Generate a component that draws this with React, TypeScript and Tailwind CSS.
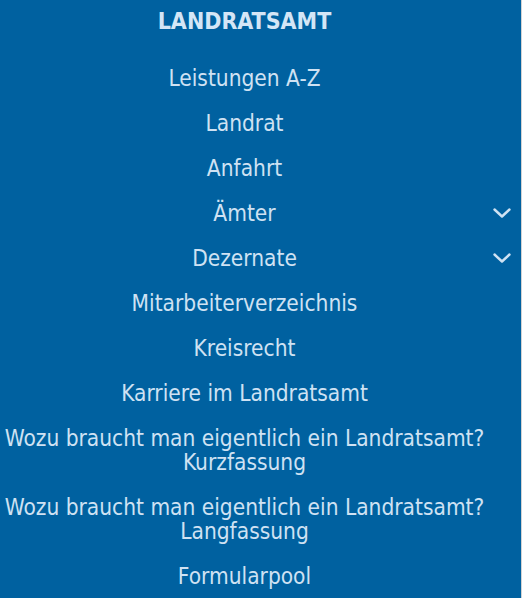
import React from "react";

const items: { label: string[]; sub?: boolean }[] = [
  { label: ["Leistungen A-Z"] },
  { label: ["Landrat"] },
  { label: ["Anfahrt"] },
  { label: ["Ämter"], sub: true },
  { label: ["Dezernate"], sub: true },
  { label: ["Mitarbeiterverzeichnis"] },
  { label: ["Kreisrecht"] },
  { label: ["Karriere im Landratsamt"] },
  { label: ["Wozu braucht man eigentlich ein Landratsamt?", "Kurzfassung"] },
  { label: ["Wozu braucht man eigentlich ein Landratsamt?", "Langfassung"] },
  { label: ["Formularpool"] },
];

function Chevron() {
  return (
    <svg width="18" height="10" viewBox="0 0 18 10" fill="none" className="absolute right-[10px] top-1/2 -translate-y-1/2">
      <polyline points="1.5,1.5 9,8.5 16.5,1.5" stroke="#cfe2f3" strokeWidth="2.4" strokeLinecap="round" strokeLinejoin="round" />
    </svg>
  );
}

export default function App() {
  return (
    <div className="flex h-[598px] w-[522px] overflow-hidden bg-white">
      <nav
        className="h-full w-[521px] bg-[#0061a0] text-[22.5px] leading-[24px] text-[#cfe2f3]"
        style={{ fontFamily: '"DejaVu Sans Condensed", "DejaVu Sans", sans-serif', fontStretch: "semi-condensed" }}
      >
        <div className="pr-[32px] pt-[9px] pb-[22px] text-center text-[23px] font-bold text-[#d4e6f6]">LANDRATSAMT</div>
        <ul className="flex flex-col">
          {items.map((it, i) => (
            <li key={i} className="relative py-[10.5px] pr-[32px] text-center">
              {it.label.map((l, j) => (
                <div key={j} className="whitespace-nowrap">{l}</div>
              ))}
              {it.sub && <Chevron />}
            </li>
          ))}
        </ul>
      </nav>
      <div className="h-full w-[1px] bg-[#d2d2d2]" />
    </div>
  );
}
